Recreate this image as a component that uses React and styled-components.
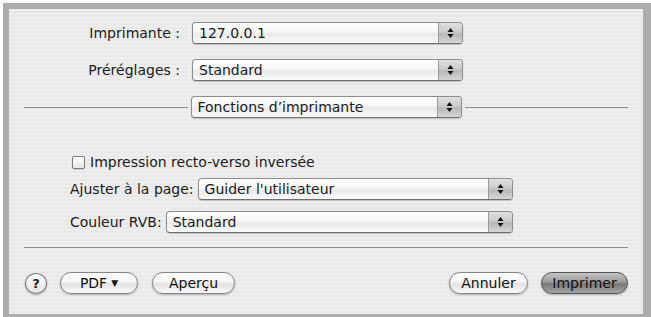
import styled, { createGlobalStyle } from 'styled-components';

const Global = createGlobalStyle`
  html, body { margin: 0; padding: 0; background: #ffffff; }
  body { font-family: "DejaVu Sans", "Liberation Sans", sans-serif; font-size: 14px; color: #1a1a1a; }
`;

const Frame = styled.div`
  margin: 3px 0 0 3px;
  width: 634px;
  height: 305px;
  border-style: solid;
  border-color: #acacac;
  border-width: 6px 8px 3px 6px;
`;

const Panel = styled.div`
  box-sizing: border-box;
  height: 100%;
  padding-top: 13px;
  display: flex;
  flex-direction: column;
  background: repeating-linear-gradient(to bottom, #eeeeee 0 2px, #e8e8e8 2px 4px);
`;

const TopGrid = styled.div`
  display: grid;
  grid-template-columns: 171px 271px;
  column-gap: 12px;
  row-gap: 15px;
  align-items: center;
`;

const Label = styled.div`
  text-align: ${p => (p.$right ? 'right' : 'left')};
  white-space: nowrap;
  line-height: 16px;
`;

const PopupBox = styled.div`
  box-sizing: border-box;
  height: 22px;
  width: ${p => p.$w || 'auto'};
  flex: ${p => (p.$grow ? 1 : 'none')};
  display: flex;
  border: 1px solid #8c8c8c;
  border-bottom-color: #6f6f6f;
  border-radius: 4px;
  background: linear-gradient(to bottom, #ffffff 0%, #f6f6f6 45%, #e9e9e9 55%, #fbfbfb 100%);
  box-shadow: 0 1px 1px rgba(0, 0, 0, 0.18);
  overflow: hidden;
`;

const PopupText = styled.div`
  flex: 1;
  padding-left: 6px;
  line-height: 20px;
  white-space: nowrap;
`;

const Arrows = styled.div`
  width: 23px;
  border-left: 1px solid #9a9a9a;
  background: linear-gradient(to bottom, #e0e0e0 0%, #cbcbcb 45%, #b8b8b8 55%, #d6d6d6 100%);
  display: flex;
  align-items: center;
  justify-content: center;
`;

const Popup = ({ children, w, grow }) => (
  <PopupBox $w={w} $grow={grow}>
    <PopupText>{children}</PopupText>
    <Arrows>
      <svg width="7" height="12" viewBox="0 0 7 12">
        <path d="M3.5 1 L6.5 5 L0.5 5 Z" fill="#111" />
        <path d="M3.5 11 L6.5 7 L0.5 7 Z" fill="#111" />
      </svg>
    </Arrows>
  </PopupBox>
);

const SepRow = styled.div`
  margin: 15px 15px 0 15px;
  display: flex;
  align-items: center;
  gap: 3px;
`;

const Line = styled.div`
  flex: 1;
  height: 1px;
  background: #8e8e8e;
`;

const FullLine = styled(Line)`
  flex: none;
  margin: ${p => p.$m};
`;

const CheckRow = styled.label`
  margin: 36px 0 0 63px;
  display: flex;
  align-items: center;
  gap: 5px;
  line-height: 16px;
`;

const Box = styled.span`
  box-sizing: border-box;
  width: 13px;
  height: 13px;
  border: 1px solid #7c7c7c;
  border-radius: 2px;
  background: linear-gradient(to bottom, #ffffff, #e6e6e6);
  box-shadow: 0 1px 1px rgba(0, 0, 0, 0.15);
`;

const FieldRow = styled.div`
  margin: ${p => p.$top}px 0 0 61px;
  width: 443px;
  display: flex;
  align-items: center;
  gap: 4px;
`;

const ButtonBar = styled.div`
  margin: 24px 15px 0 16px;
  display: flex;
  align-items: center;
`;

const Pill = styled.div`
  box-sizing: border-box;
  height: 22px;
  width: ${p => p.$w}px;
  margin-left: ${p => p.$ml || 0}px;
  border-radius: 11px;
  border: 1px solid ${p => (p.$def ? '#555' : '#858585')};
  background: ${p =>
    p.$def
      ? 'linear-gradient(to bottom, #c4c4c4 0%, #9a9a9a 45%, #787878 55%, #a6a6a6 100%)'
      : 'linear-gradient(to bottom, #ffffff 0%, #f4f4f4 45%, #e3e3e3 55%, #fafafa 100%)'};
  box-shadow: 0 1px 2px rgba(0, 0, 0, 0.25);
  display: flex;
  align-items: center;
  justify-content: center;
  line-height: 20px;
  color: #111;
`;

const Help = styled.div`
  box-sizing: border-box;
  width: 22px;
  height: 21px;
  border-radius: 50%;
  border: 1px solid #7d7d7d;
  background: linear-gradient(to bottom, #ffffff, #e2e2e2);
  box-shadow: 0 1px 2px rgba(0, 0, 0, 0.25);
  display: flex;
  align-items: center;
  justify-content: center;
  font-weight: bold;
  font-size: 13px;
  color: #222;
`;

const Spacer = styled.div`
  flex: 1;
`;

const Tri = styled.span`
  font-size: 9px;
  margin-left: 4px;
`;

export default function App() {
  return (
    <>
      <Global />
      <Frame>
        <Panel>
          <TopGrid>
            <Label $right>Imprimante :</Label>
            <Popup w="271px">127.0.0.1</Popup>
            <Label $right>Préréglages :</Label>
            <Popup w="271px">Standard</Popup>
          </TopGrid>
          <SepRow>
            <Line />
            <Popup w="271px">Fonctions d’imprimante</Popup>
            <Line />
          </SepRow>
          <CheckRow>
            <Box />
            Impression recto-verso inversée
          </CheckRow>
          <FieldRow $top={8}>
            <Label>Ajuster à la page:</Label>
            <Popup grow>Guider l'utilisateur</Popup>
          </FieldRow>
          <FieldRow $top={11}>
            <Label>Couleur RVB:</Label>
            <Popup grow>Standard</Popup>
          </FieldRow>
          <FullLine $m="14px 15px 0 15px" />
          <ButtonBar>
            <Help>?</Help>
            <Pill $w={78} $ml={13}>
              PDF<Tri>▼</Tri>
            </Pill>
            <Pill $w={83} $ml={14}>Aperçu</Pill>
            <Spacer />
            <Pill $w={79}>Annuler</Pill>
            <Pill $w={87} $ml={13} $def>Imprimer</Pill>
          </ButtonBar>
        </Panel>
      </Frame>
    </>
  );
}
